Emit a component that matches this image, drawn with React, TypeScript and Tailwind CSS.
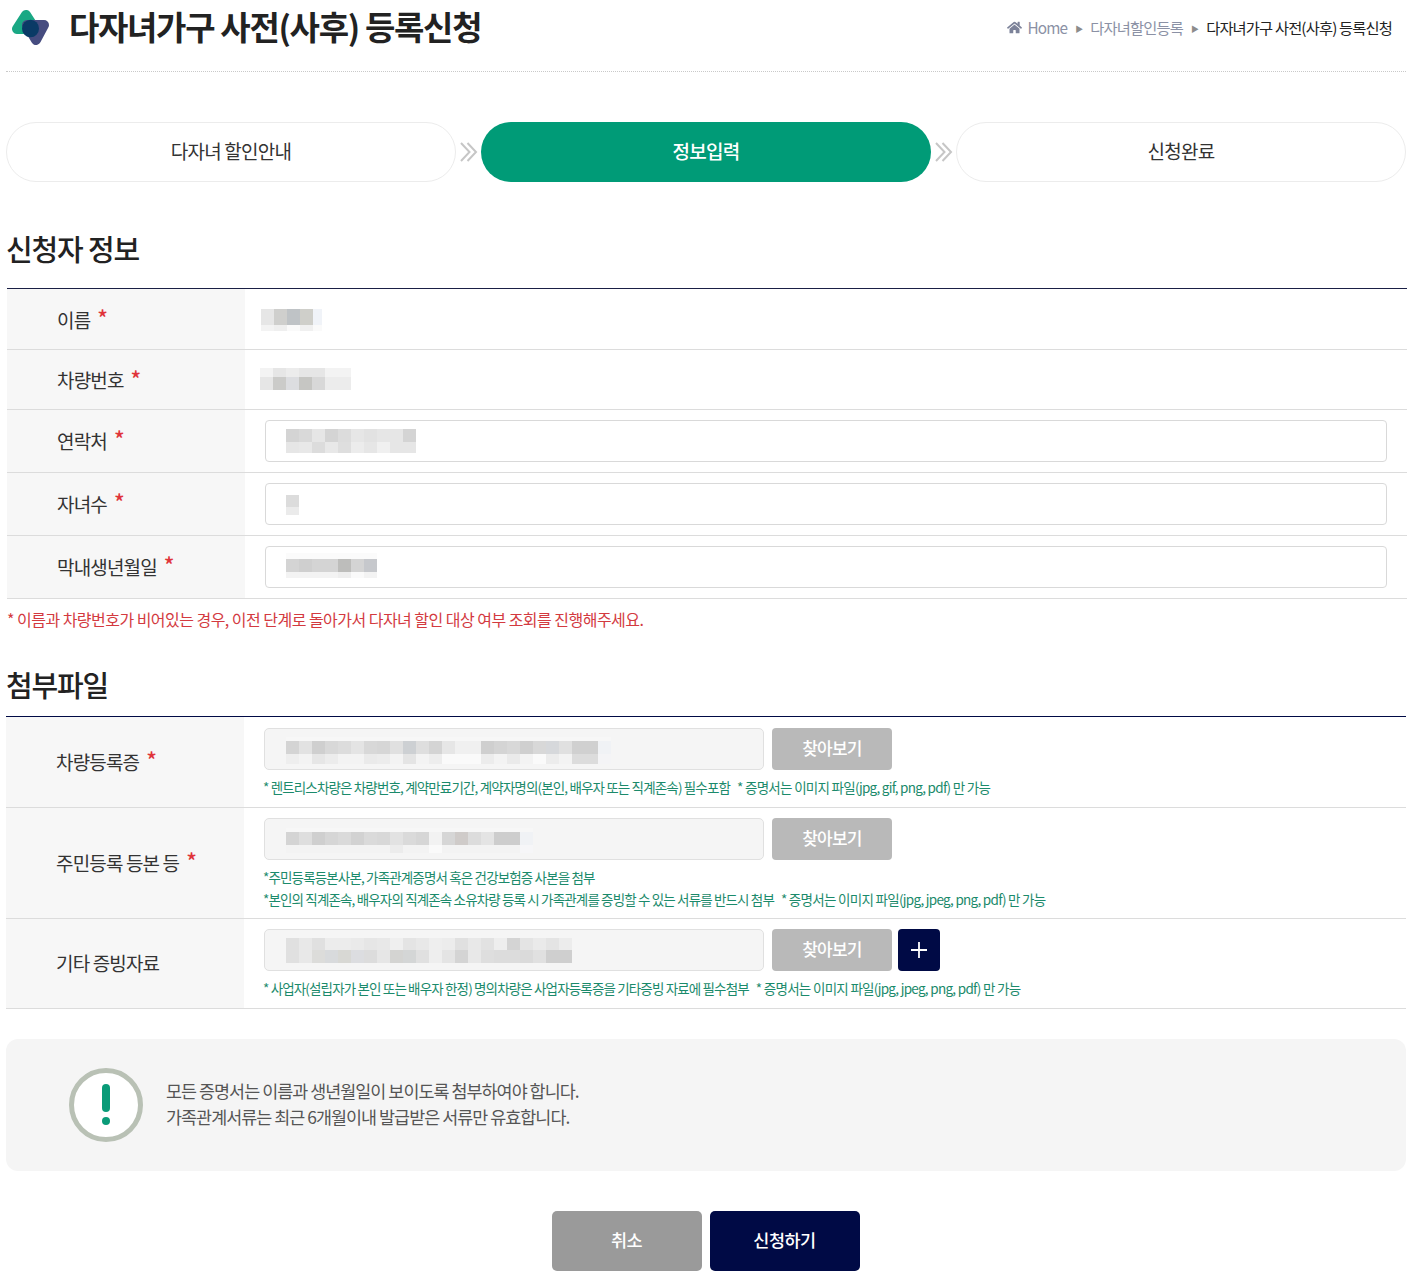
import React from "react";
import { FaHome } from "react-icons/fa";

const FONT = "font-['Noto_Sans_CJK_KR','Noto_Sans',sans-serif]";

type MosaicRow = { h: number; c: string[] };

function Mosaic({ rows, cell = 13, lastCell, className = "" }: { rows: MosaicRow[]; cell?: number; lastCell?: number; className?: string }) {
  return (
    <div className={`flex flex-col ${className}`}>
      {rows.map((r, i) => (
        <div key={i} className="flex" style={{ height: r.h }}>
          {r.c.map((col, j) => (
            <div key={j} style={{ width: lastCell && j === r.c.length - 1 ? lastCell : cell, background: col }} />
          ))}
        </div>
      ))}
    </div>
  );
}

function Req() {
  return <span className="text-[#e0343a] text-[22px] leading-none font-medium ml-[7px] relative -top-[3px]">*</span>;
}

function Row({ label, req = true, children, h, labelClass = "" }: { label: string; req?: boolean; children: React.ReactNode; h: string; labelClass?: string }) {
  return (
    <div className={`flex border-b border-[#dcdcdc] ${h}`}>
      <div className={`w-[238px] shrink-0 bg-[#f7f7f7] pl-[50px] flex items-center text-[19px] tracking-[-0.045em] text-[#333] ${labelClass}`}>
        {label}
        {req && <Req />}
      </div>
      <div className="flex-1 min-w-0">{children}</div>
    </div>
  );
}

function TextBox({ rows, className }: { rows: MosaicRow[]; className?: string }) {
  return (
    <div className="h-[42px] border border-[#d9d9d9] rounded-[4px] bg-white flex items-center pl-5">
      <Mosaic rows={rows} className={className} />
    </div>
  );
}

function FileRow({ rows, plus, className }: { rows: MosaicRow[]; plus?: boolean; className?: string }) {
  return (
    <div className="flex gap-2">
      <div className="w-[500px] h-[42px] border border-[#e0e0e0] rounded-[5px] bg-[#f5f5f5] flex items-center pl-[21px]">
        <Mosaic rows={rows} className={className} />
      </div>
      <button className="w-[120px] h-[42px] pb-[2px] rounded-[4px] bg-[#b9b9b9] text-white text-[17px] font-medium tracking-[-0.045em]">찾아보기</button>
      {plus && (
        <button className="w-[42px] h-[42px] -ml-0.5 rounded-[4px] bg-[#000a45] flex items-center justify-center">
          <svg width="16" height="16" viewBox="0 0 16 16"><path d="M8 0v16M0 8h16" stroke="#fff" strokeWidth="1.8" /></svg>
        </button>
      )}
    </div>
  );
}

function Note({ a, b }: { a: string; b?: string }) {
  return (
    <p className="-ml-px text-[13.5px] leading-[22px] tracking-[-0.063em] text-[#1b8a6b] whitespace-pre">
      {a}
      {b && <span className="tracking-[-0.052em]">{"   " + b}</span>}
    </p>
  );
}

function Chevrons() {
  return (
    <div className="w-[25px] flex items-center justify-center shrink-0">
      <svg width="18" height="20" viewBox="0 0 18 20" fill="none" stroke="#c6c6c6" strokeWidth="2">
        <path d="M1 1l8.5 9L1 19" />
        <path d="M7.5 1l8.5 9-8.5 9" />
      </svg>
    </div>
  );
}

function Step({ label, active }: { label: string; active?: boolean }) {
  return (
    <div
      className={`w-[450px] h-[60px] pb-[2px] rounded-[30px] flex items-center justify-center text-[19px] tracking-[-0.04em] ${
        active ? "bg-[#009b77] text-white font-medium" : "border border-[#ececec] bg-white text-[#333]"
      }`}
    >
      {label}
    </div>
  );
}

const L = "#f3f3f3", M = "#e6e6e6", D = "#d4d4d4", W = "#fafafa", F = "#fbfbfb";

export default function App() {
  return (
    <div className={`${FONT} w-[1411px] bg-white pb-[10px] text-[#222]`}>
      {/* header */}
      <header className="ml-[6px] w-[1400px] h-[72px] border-b border-dotted border-[#c9c9c9] flex items-start justify-between">
        <div className="flex items-center h-[56px]">
          <svg width="40" height="40" viewBox="0 0 40 40" className="ml-[5px] mr-[18px]">
            <path d="M15 7L6 21h18z" fill="#1aa884" stroke="#1aa884" strokeWidth="10" strokeLinejoin="round" />
            <path d="M16 17h17l-8 15z" fill="#464c80" stroke="#464c80" strokeWidth="10" strokeLinejoin="round" />
            <ellipse cx="19.5" cy="20.5" rx="8.5" ry="8.8" fill="#0a3a66" />
          </svg>
          <h1 className="text-[33px] pb-[3px] font-bold tracking-[-0.04em] text-[#222]">다자녀가구 사전(사후) 등록신청</h1>
        </div>
        <nav className="flex items-center h-[56px] pb-[2px] pr-[14px] text-[15.3px] tracking-[-0.055em] text-[#8b91a5]">
          <FaHome className="text-[15px] mr-[6px] text-[#7c8299]" />
          <span>Home</span>
          <span className="mx-[8px] text-[8px] text-[#8c8c8c] relative top-[2px]">▶</span>
          <span>다자녀할인등록</span>
          <span className="mx-[8px] text-[8px] text-[#8c8c8c] relative top-[2px]">▶</span>
          <span className="text-[#222]">다자녀가구 사전(사후) 등록신청</span>
        </nav>
      </header>

      {/* steps */}
      <div className="ml-[6px] w-[1400px] mt-[50px] flex">
        <Step label="다자녀 할인안내" />
        <Chevrons />
        <Step label="정보입력" active />
        <Chevrons />
        <Step label="신청완료" />
      </div>

      {/* applicant */}
      <section className="ml-[7px] w-[1400px]">
        <h2 className="mt-[44px] h-[44px] leading-[44px] text-[29px] -ml-px font-medium tracking-[-0.04em] text-[#222]">신청자 정보</h2>
        <div className="mt-[18px] border-t border-[#1a1f45]">
          <Row label="이름" h="h-[61px]" labelClass="pt-[2px]">
            <div className="h-full flex items-center pl-4">
              <Mosaic className="mt-px" lastCell={9} rows={[
                { h: 16, c: [M, "#cfcfcd", "#bfc3c6", "#cfcfca", "#f0f3f8"] },
                { h: 6, c: [L, "#efefef", W, "#f0f0f0", W] },
              ]} />
            </div>
          </Row>
          <Row label="차량번호" h="h-[60px]" labelClass="pt-[2px]">
            <div className="h-full flex items-center pl-[15px]">
              <Mosaic className="mb-px" rows={[
                { h: 9, c: [L, M, "#ececec", M, M, L, L] },
                { h: 13, c: [M, "#cbcbc9", "#dcdde0", "#c6c6c3", "#d8d8d8", "#ececec", "#ececec"] },
              ]} />
            </div>
          </Row>
          <Row label="연락처" h="h-[63px]">
            <div className="h-full flex items-center pl-5 pr-5">
              <div className="flex-1">
                <TextBox rows={[
                  { h: 13, c: [D, "#d9d9d9", M, D, "#dcdcdc", M, "#e2e2e2", M, M, D] },
                  { h: 11, c: [M, "#e8e8e8", "#dcdcdc", "#e8e8e8", "#dedede", "#ececec", "#e6e6e6", "#f0f0f0", M, M] },
                ]} />
              </div>
            </div>
          </Row>
          <Row label="자녀수" h="h-[63px]">
            <div className="h-full flex items-center pl-5 pr-5">
              <div className="flex-1">
                <TextBox className="mt-[2px]" rows={[{ h: 12, c: ["#dcdcdc"] }, { h: 8, c: ["#ebebeb"] }]} />
              </div>
            </div>
          </Row>
          <Row label="막내생년월일" h="h-[63px]">
            <div className="h-full flex items-center pl-5 pr-5">
              <div className="flex-1">
                <TextBox className="mb-[3px]" rows={[
                  { h: 6, c: [F, F, F, F, F, F, F] },
                  { h: 13, c: [D, "#cfcfcf", D, D, "#bdbdbb", D, "#c6c8cc"] },
                  { h: 6, c: [L, L, L, L, "#eeeeee", W, L] },
                ]} />
              </div>
            </div>
          </Row>
        </div>
        <p className="mt-[9px] text-[16px] leading-[22px] tracking-[-0.033em] text-[#d33a3f]">* 이름과 차량번호가 비어있는 경우, 이전 단계로 돌아가서 다자녀 할인 대상 여부 조회를 진행해주세요.</p>
      </section>

      {/* attachments */}
      <section className="ml-[6px] w-[1400px]">
        <h2 className="mt-[32px] h-[44px] leading-[44px] text-[29px] font-medium tracking-[-0.04em] text-[#222]">첨부파일</h2>
        <div className="mt-[10px] border-t border-[#000a45]">
          <Row label="차량등록증" h="h-[91px]">
            <div className="pl-5 pt-[11px]">
              <FileRow className="mt-[3px]" rows={[
                { h: 4, c: Array(25).fill("#f7f7f7") },
                { h: 13, c: [D, "#e2e2e2", "#cfcfcf", "#d8d8d8", "#dcdcdc", "#e4e4e4", "#d8d8d8", "#d6d6d6", "#e0e0e0", "#cdd0d3", "#dedede", "#d4d4d4", "#e6e6e6", "#f0f0f0", "#f0f0f0", "#cfcfcf", "#d4d4d4", "#d8d8d8", "#cfcfcf", "#d8d8d8", "#d6d8db", "#e0e0e0", "#d0d0d0", "#d0d0d0", "#f0f2f5"] },
                { h: 10, c: ["#eeeeee", L, M, "#ececec", L, L, "#eaeaea", "#ececec", L, "#e4e4e4", L, "#ededed", W, W, W, "#ececec", L, "#eaeaea", L, W, "#ececec", L, "#dcdcdc", "#dcdcdc", "#f4f4f6"] },
              ]} />
              <div className="mt-[6px]"><Note a="* 렌트리스차량은 차량번호, 계약만료기간, 계약자명의(본인, 배우자 또는 직계존속) 필수포함" b="* 증명서는 이미지 파일(jpg, gif, png, pdf) 만 가능" /></div>
            </div>
          </Row>
          <Row label="주민등록 등본 등" h="h-[111px]">
            <div className="pl-5 pt-[10px]">
              <FileRow className="mt-[3px]" rows={[
                { h: 4, c: Array(19).fill("#f7f7f7") },
                { h: 13, c: [D, "#dedede", "#cfcfcf", "#d6d6d6", "#dadada", "#d2d2d2", "#dadada", "#d8d8d8", "#e2e2e2", "#dadada", "#d6d6d6", "#f2f2f2", "#d6d6d6", "#cfcbc9", "#dcdcdc", "#e4e4e4", "#cdcdcd", "#cdcdcd", "#f0f2f5"] },
                { h: 8, c: [L, L, L, L, L, L, L, L, "#ececec", L, L, W, L, L, L, L, L, L, "#f6f6f8"] },
              ]} />
              <div className="mt-[6px]">
                <Note a="*주민등록등본사본, 가족관계증명서 혹은 건강보험증 사본을 첨부" />
                <Note a="*본인의 직계존속, 배우자의 직계존속 소유차량 등록 시 가족관계를 증빙할 수 있는 서류를 반드시 첨부" b="* 증명서는 이미지 파일(jpg, jpeg, png, pdf) 만 가능" />
              </div>
            </div>
          </Row>
          <Row label="기타 증빙자료" req={false} h="h-[90px]">
            <div className="pl-5 pt-[10px]">
              <FileRow plus rows={[
                { h: 12, c: ["#e0e0e0", "#e8e8e8", "#e0e0e0", "#ececec", "#ececec", "#eaeaea", "#e6e6e6", "#e8e8e8", "#efefef", "#e4e4e4", "#e8e8e8", "#eeeeee", "#ececec", "#e0e0e0", "#e8e8e8", "#e2e2e2", "#eeeeee", "#d4d4d4", "#e4e4e4", "#eaeaea", "#e4e4e4", "#ececec"] },
                { h: 13, c: ["#e0e0e0", "#e8e8e8", "#dcdcda", "#d8dadc", "#d8d8d4", "#dcdde0", "#dcdcdc", "#e6e6e6", "#d4d4d2", "#d4d6d6", "#e0e0e0", "#eeeeee", "#e4e4e4", "#d4d4d4", "#e8e8e8", "#dedede", "#dcdcdc", "#dcdcdc", "#dadada", "#e0e0e0", "#cfcfcf", "#cfcfcf"] },
              ]} />
              <div className="mt-[6px]"><Note a="* 사업자(설립자가 본인 또는 배우자 한정) 명의차량은 사업자등록증을 기타증빙 자료에 필수첨부" b="* 증명서는 이미지 파일(jpg, jpeg, png, pdf) 만 가능" /></div>
            </div>
          </Row>
        </div>
      </section>

      {/* notice */}
      <div className="ml-[6px] w-[1400px] mt-[30px] h-[132px] rounded-[12px] bg-[#f5f5f5] flex items-center pl-[63px]">
        <svg width="74" height="74" viewBox="0 0 74 74" className="shrink-0">
          <circle cx="37" cy="37" r="34.5" fill="#fff" stroke="#b9c1b5" strokeWidth="5" />
          <path d="M37 20v20" stroke="#0a9b78" strokeWidth="8" strokeLinecap="round" />
          <circle cx="37" cy="53" r="4" fill="#0a9b78" />
        </svg>
        <div className="ml-[23px] pb-[2px] text-[17.4px] leading-[26px] tracking-[-0.055em] text-[#555]">
          <p>모든 증명서는 이름과 생년월일이 보이도록 첨부하여야 합니다.</p>
          <p>가족관계서류는 최근 6개월이내 발급받은 서류만 유효합니다.</p>
        </div>
      </div>

      {/* actions */}
      <div className="mt-[40px] flex justify-center gap-2">
        <button className="w-[150px] h-[60px] pb-[2px] rounded-[5px] bg-[#9a9a9a] text-white text-[17.5px] font-medium tracking-[-0.03em]">취소</button>
        <button className="w-[150px] h-[60px] pb-[2px] rounded-[5px] bg-[#000a45] text-white text-[17.5px] font-medium tracking-[-0.03em]">신청하기</button>
      </div>
    </div>
  );
}
